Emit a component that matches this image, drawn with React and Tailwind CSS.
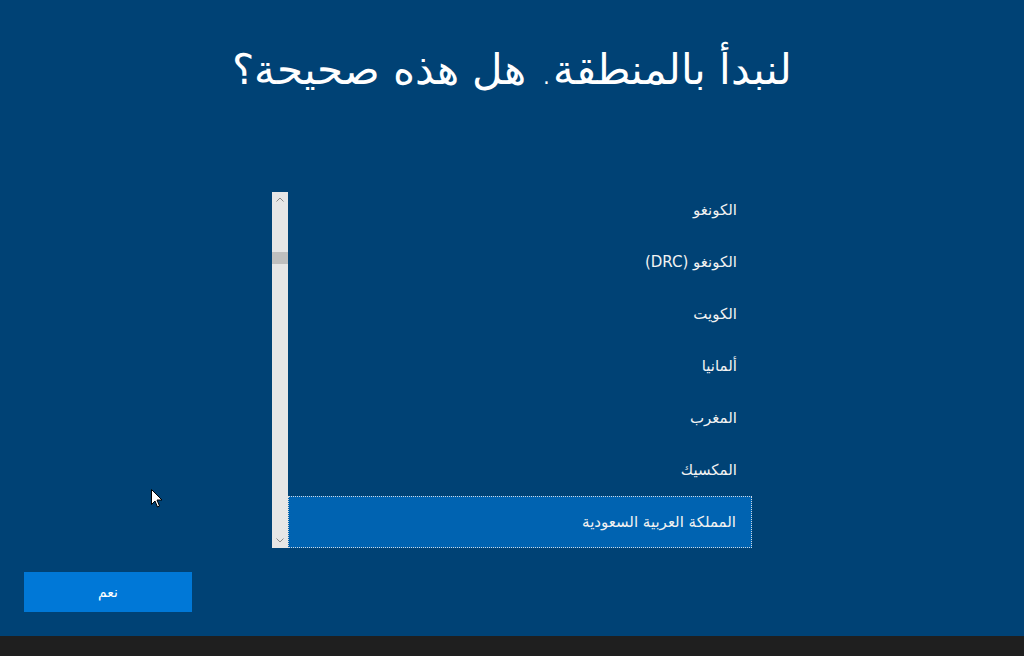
import React from "react";

const items = [
  "الكونغو",
  "الكونغو (DRC)",
  "الكويت",
  "ألمانيا",
  "المغرب",
  "المكسيك",
  "المملكة العربية السعودية",
];

export default function App() {
  const font = { fontFamily: '"Segoe UI", "DejaVu Sans", "Noto Sans", sans-serif' };
  return (
    <div className="w-[1024px] h-[656px] bg-[#004275] flex flex-col overflow-hidden relative" style={font}>
      <div className="flex-1 flex flex-col">
        <h1 dir="rtl" className="mt-[40px] h-[60px] text-center text-white text-[42px] font-extralight leading-[60px]">
          لنبدأ بالمنطقة. هل هذه صحيحة؟
        </h1>
        <div className="mt-[92px] ml-[272px] flex w-[480px] h-[356px]">
          <div className="w-[16px] h-full bg-[#e6e6e6] flex flex-col items-center">
            <svg width="10" height="10" viewBox="0 0 10 10" className="mt-[3px]">
              <path d="M1.5 6.5 L5 3 L8.5 6.5" fill="none" stroke="#8a8a8a" strokeWidth="1" />
            </svg>
            <div className="w-full h-[12px] bg-[#bfbfbf] mt-[47px]"></div>
            <svg width="10" height="10" viewBox="0 0 10 10" className="mt-auto mb-[3px]">
              <path d="M1.5 3.5 L5 7 L8.5 3.5" fill="none" stroke="#8a8a8a" strokeWidth="1" />
            </svg>
          </div>
          <div className="flex-1 h-full overflow-hidden">
            <div className="-mt-[8px] flex flex-col">
              {items.map((t, i) => (
                <div
                  key={i}
                  dir="rtl"
                  className={
                    "h-[52px] flex items-center pr-[15px] text-[15px] text-[#f2f2f2] " +
                    (i === items.length - 1
                      ? "bg-[#0063b1] border border-dotted border-[#d0d8e0]"
                      : "")
                  }
                >
                  {t}
                </div>
              ))}
            </div>
          </div>
        </div>
        <div className="mt-[24px] ml-[24px] w-[168px] h-[40px] bg-[#0078d7] flex items-center justify-center text-white text-[14px]" dir="rtl">
          نعم
        </div>
      </div>
      <div className="h-[20px] bg-[#1f1f1f] shrink-0"></div>
      <svg className="absolute left-[151px] top-[489px]" width="12" height="20" viewBox="0 0 12 20">
        <path d="M0.5 0.5 L0.5 15.5 L4 12 L6.5 18 L8.5 17 L6 11 L11 11 Z" fill="#fff" stroke="#000" strokeWidth="1" />
      </svg>
    </div>
  );
}
